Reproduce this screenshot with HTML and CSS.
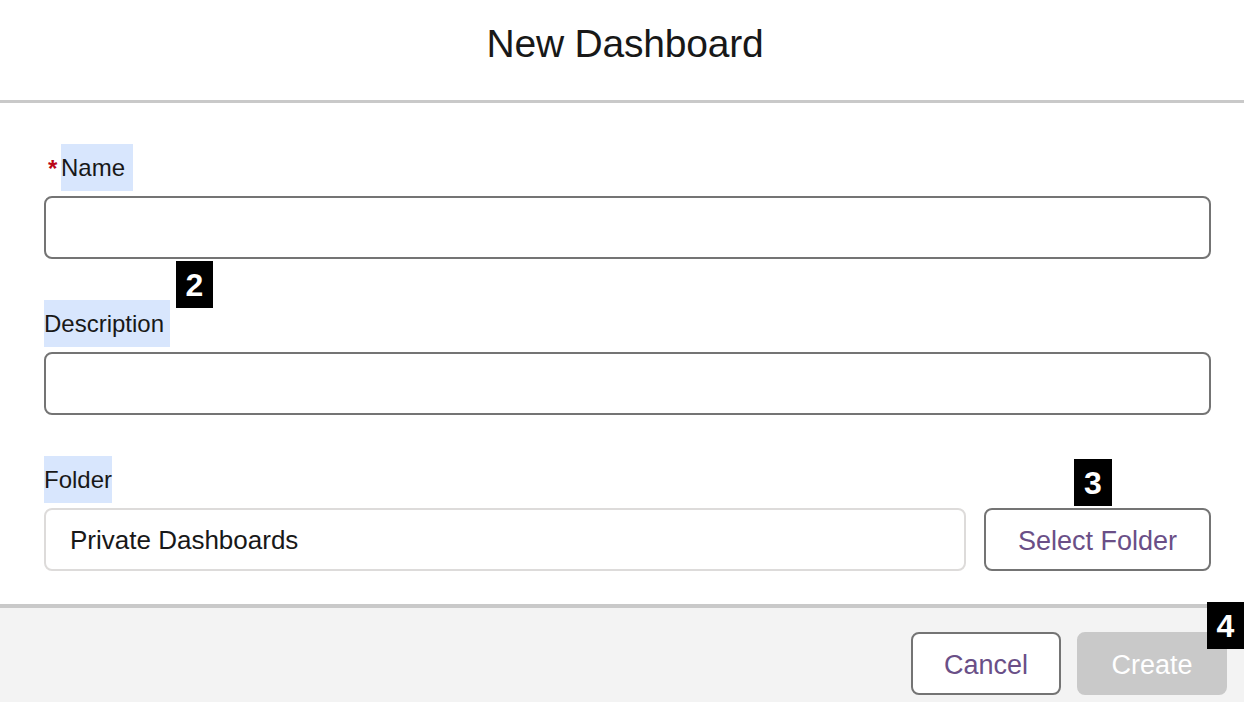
FILE: index.html
```html
<!DOCTYPE html>
<html lang="en">
<head>
<meta charset="utf-8">
<title>New Dashboard</title>
<link rel="stylesheet" href="styles.css">
</head>
<body>
<div class="modal">
  <header class="modal-header">
    <h1 class="title">New Dashboard</h1>
  </header>
  <form class="modal-body">
    <div class="field">
      <div class="label-row label-row--required">
        <abbr class="required" title="required">*</abbr>
        <label class="label label--name" for="name">Name</label>
      </div>
      <input class="input" id="name" type="text">
    </div>
    <div class="field field--spaced">
      <div class="label-row">
        <label class="label label--desc" for="desc">Description</label>
      </div>
      <input class="input" id="desc" type="text">
    </div>
    <div class="field field--spaced">
      <div class="label-row">
        <label class="label" for="folder">Folder</label>
      </div>
      <div class="folder-row">
        <input class="input input--readonly" id="folder" type="text" value="Private Dashboards" readonly>
        <button type="button" class="btn btn--neutral btn--select">Select Folder</button>
      </div>
    </div>
  </form>
  <footer class="modal-footer">
    <button type="button" class="btn btn--neutral btn--footer">Cancel</button>
    <button type="button" class="btn btn--disabled btn--footer">Create</button>
  </footer>
  <span class="badge badge--2">2</span>
  <span class="badge badge--3">3</span>
  <span class="badge badge--4">4</span>
</div>
</body>
</html>
```

FILE: styles.css
```css
* {
  box-sizing: border-box;
}

html, body {
  margin: 0;
  padding: 0;
  background: #ffffff;
}

body {
  font-family: "Liberation Sans", Arial, Helvetica, sans-serif;
  color: #181818;
  overflow: hidden;
}

.modal {
  position: relative;
  width: 1244px;
  height: 702px;
  display: flex;
  flex-direction: column;
}

.modal-header {
  height: 103px;
  border-bottom: 3px solid #c9c9c9;
  display: flex;
  align-items: center;
  justify-content: center;
  padding-bottom: 12px;
}

.title {
  margin: 0;
  font-size: 39px;
  font-weight: 400;
  color: #181818;
  letter-spacing: -0.2px;
  padding-left: 6px;
}

.modal-body {
  flex: 1;
  padding: 41px 33px 0 44px;
  margin: 0;
}

.field {
  display: flex;
  flex-direction: column;
}

.field--spaced {
  margin-top: 41px;
}

.label-row {
  display: flex;
  align-items: flex-start;
  height: 47px;
  margin-bottom: 5px;
}

.label-row--required {
  padding-left: 4px;
}

.required {
  color: #ba0517;
  text-decoration: none;
  border: 0;
  font-size: 24px;
  font-weight: 700;
  line-height: 24px;
  margin-top: 13px;
  margin-right: 3px;
  width: 10px;
}

.label {
  background: #d8e6fd;
  font-size: 24px;
  line-height: 47px;
  color: #181818;
  padding-right: 0;
}

.label--name {
  padding-right: 8px;
}

.label--desc {
  padding-right: 6px;
}

.input {
  display: block;
  width: 100%;
  height: 63px;
  border: 2px solid #747474;
  border-radius: 8px;
  background: #ffffff;
  font-family: inherit;
  font-size: 26px;
  color: #181818;
  padding: 2px 24px 0;
  outline: none;
}

.input--readonly {
  border-color: #dddbda;
}

.folder-row {
  display: flex;
  gap: 18px;
}

.folder-row .input {
  flex: 1;
  width: auto;
}

.btn {
  font-family: inherit;
  font-size: 27px;
  height: 63px;
  border-radius: 8px;
  padding: 3px 0 0;
  cursor: pointer;
}

.btn--neutral {
  background: #ffffff;
  border: 2px solid #747474;
  color: #6a4f87;
}

.btn--select {
  width: 227px;
  flex: none;
}

.btn--disabled {
  background: #c9c9c9;
  border: 2px solid #c9c9c9;
  color: #ffffff;
}

.btn--footer {
  width: 150px;
}

.modal-footer {
  height: 98px;
  border-top: 4px solid #c9c9c9;
  background: #f3f3f3;
  display: flex;
  justify-content: flex-end;
  align-items: flex-start;
  gap: 16px;
  padding: 24px 17px 0 0;
}

.badge {
  position: absolute;
  background: #000000;
  color: #ffffff;
  font-weight: 700;
  font-size: 32px;
  line-height: 49px;
  height: 47px;
  text-align: center;
}

.badge--2 {
  left: 176px;
  top: 261px;
  width: 37px;
}

.badge--3 {
  left: 1074px;
  top: 459px;
  width: 38px;
}

.badge--4 {
  left: 1207px;
  top: 602px;
  width: 37px;
}
```
